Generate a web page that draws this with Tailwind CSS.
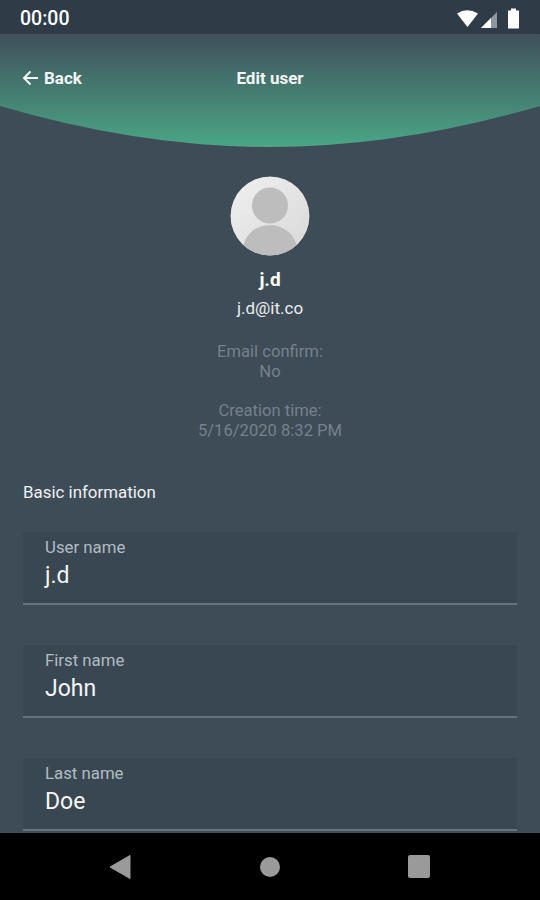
<!DOCTYPE html>
<html>
<head>
<meta charset="utf-8">
<script src="https://cdn.jsdelivr.net/npm/@tailwindcss/browser@4"></script>
</head>
<body class="m-0">
<div class="w-[540px] h-[900px] flex flex-col overflow-hidden bg-[#3e4c57] font-['Roboto',sans-serif] text-white">
  <div class="h-[34px] shrink-0 bg-[#2f3c48] flex items-center justify-between pl-[20px] pr-[14px] pt-[3px]">
    <span class="text-[19.5px] font-medium leading-none">00:00</span>
    <svg width="72" height="24" viewBox="0 0 72 24" class="-mt-[3px]">
      <path d="M3 8.5 Q13 2 24 8.5 L13.5 22 Z" fill="#fff"/>
      <path d="M27 23 L43 7 V23 Z" fill="#8d979d"/>
      <path d="M27 23 L37 13 V23 Z" fill="#fff"/>
      <path d="M54 5.5 h3 v-2 h5 v2 h3 v18 h-11 Z" fill="#fff"/>
    </svg>
  </div>
  <main class="flex-1 min-h-0 overflow-hidden flex flex-col">
    <header class="relative h-[113px] shrink-0">
      <svg class="absolute inset-0" width="540" height="113" viewBox="0 0 540 113">
        <defs>
          <linearGradient id="g" x1="0" y1="0" x2="0" y2="1">
            <stop offset="0" stop-color="#3f505b"/>
            <stop offset="1" stop-color="#4aa685"/>
          </linearGradient>
        </defs>
        <path d="M0 0 H540 V72 Q400 113 270 113 Q140 113 0 72 Z" fill="url(#g)"/>
      </svg>
      <div class="relative h-[88px] flex items-center justify-center">
        <div class="absolute left-[22px] top-[34px] flex items-center gap-[5px]">
          <svg width="17" height="16" viewBox="0 0 17 16" fill="none" stroke="#f2f5f4" stroke-width="2"><path d="M16 8 H2 M8.5 1.5 L2 8 L8.5 14.5"/></svg>
          <span class="text-[17px] font-bold leading-5 text-[#f2f5f4]">Back</span>
        </div>
        <span class="text-[17px] font-bold leading-5 text-[#f2f5f4]">Edit user</span>
      </div>
    </header>
    <section class="flex flex-col items-center pt-[29px]">
      <svg width="80" height="80" viewBox="0 0 80 80" class="rounded-full">
        <defs>
          <linearGradient id="a" x1="0" y1="0" x2="1" y2="1">
            <stop offset="0" stop-color="#f0f0f0"/>
            <stop offset="1" stop-color="#d8d8d8"/>
          </linearGradient>
          <clipPath id="c"><circle cx="40" cy="40" r="39.5"/></clipPath>
        </defs>
        <circle cx="40" cy="40" r="39.5" fill="url(#a)"/>
        <circle cx="40" cy="29.5" r="18" fill="#bdbdbd"/>
        <ellipse cx="40" cy="74" rx="27" ry="25" fill="#bdbdbd" clip-path="url(#c)"/>
      </svg>
      <p class="mt-[13px] text-[19px] font-bold leading-[22px]">j.d</p>
      <p class="mt-[7px] text-[17px] leading-[20px] text-[#e8ecee]">j.d@it.co</p>
      <div class="mt-[24px] text-center text-[16.6px] leading-[20px] text-[#75818b]">
        <p>Email confirm:</p>
        <p>No</p>
        <p class="mt-[19px]">Creation time:</p>
        <p>5/16/2020 8:32 PM</p>
      </div>
    </section>
    <section class="px-[23px] pt-[41px]">
      <h2 class="text-[16.9px] leading-[20px] text-[#eef1f3]">Basic information</h2>
      <div class="mt-[30px] flex flex-col gap-[40px]">
        <div class="h-[73px] bg-[#394752] border-b-2 border-[#65737e] pl-[22px] pt-[6px]">
          <p class="text-[16.8px] leading-[18px] text-[#b3bbc2]">User name</p>
          <p class="mt-[6px] text-[23px] leading-[28px] text-[#f4f6f7]">j.d</p>
        </div>
        <div class="h-[73px] bg-[#394752] border-b-2 border-[#65737e] pl-[22px] pt-[6px]">
          <p class="text-[16.8px] leading-[18px] text-[#b3bbc2]">First name</p>
          <p class="mt-[6px] text-[23px] leading-[28px] text-[#f4f6f7]">John</p>
        </div>
        <div class="h-[73px] bg-[#394752] border-b-2 border-[#65737e] pl-[22px] pt-[6px]">
          <p class="text-[16.8px] leading-[18px] text-[#b3bbc2]">Last name</p>
          <p class="mt-[6px] text-[23px] leading-[28px] text-[#f4f6f7]">Doe</p>
        </div>
      </div>
    </section>
  </main>
  <nav class="h-[67px] shrink-0 bg-black flex items-center justify-center gap-[127px] pr-[2px]">
    <svg width="24" height="26" viewBox="0 0 24 26"><path d="M22 1.5 V24.5 L2 13 Z" fill="#9a9a9a" stroke="#9a9a9a" stroke-linejoin="round"/></svg>
    <svg width="22" height="22" viewBox="0 0 22 22"><circle cx="11" cy="11" r="10" fill="#9a9a9a"/></svg>
    <div class="w-[22px] h-[23px] rounded-[2px] bg-[#9a9a9a]"></div>
  </nav>
</div>
</body>
</html>
